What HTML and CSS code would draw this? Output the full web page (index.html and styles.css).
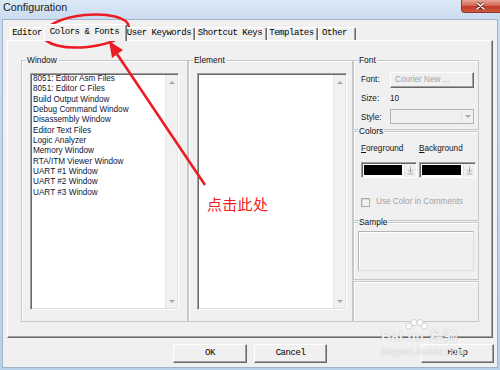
FILE: index.html
```html
<!DOCTYPE html>
<html>
<head>
<meta charset="utf-8">
<title>Configuration</title>
<link rel="stylesheet" href="styles.css">
</head>
<body>
<div class="window">
  <div class="titlebar">
    <span class="title">Configuration</span>
    <div class="close-btn">
      <svg width="9" height="8" viewBox="0 0 9 8"><path d="M1 1 L8 7 M8 1 L1 7" stroke="#6b2418" stroke-width="3" stroke-linecap="round"/><path d="M1 1 L8 7 M8 1 L1 7" stroke="#fff" stroke-width="1.6" stroke-linecap="round"/></svg>
    </div>
  </div>
  <div class="client">
    <div class="tabs">
      <div class="tab tab-editor">Editor</div>
      <div class="tab tab-colors selected">Colors &amp; Fonts</div>
      <div class="tab tab-user">User Keywords</div>
      <div class="tab tab-short">Shortcut Keys</div>
      <div class="tab tab-templ">Templates</div>
      <div class="tab tab-other">Other</div>
    </div>
    <div class="panel">
      <div class="group group-window">
        <span class="legend">Window</span>
        <div class="listbox list-window">
          <ul class="items">
            <li>8051: Editor Asm Files</li>
            <li>8051: Editor C Files</li>
            <li>Build Output Window</li>
            <li>Debug Command Window</li>
            <li>Disassembly Window</li>
            <li>Editor Text Files</li>
            <li>Logic Analyzer</li>
            <li>Memory Window</li>
            <li>RTA/ITM Viewer Window</li>
            <li>UART #1 Window</li>
            <li>UART #2 Window</li>
            <li>UART #3 Window</li>
          </ul>
          <div class="vscroll"><span class="arr up"></span><span class="arr down"></span></div>
        </div>
      </div>
      <div class="group group-element">
        <span class="legend">Element</span>
        <div class="listbox list-element">
          <ul class="items"></ul>
          <div class="vscroll"><span class="arr up"></span><span class="arr down"></span></div>
        </div>
      </div>
      <div class="right-col">
        <div class="group group-font">
          <span class="legend">Font</span>
          <div class="font-grid">
            <span class="lbl lbl-font">Font:</span>
            <div class="btn3d font-btn">Courier New ...</div>
            <span class="lbl lbl-size">Size:</span>
            <span class="lbl size-val">10</span>
            <span class="lbl lbl-style">Style:</span>
            <div class="combo style-combo"><span class="combo-arrow"><span class="tri"></span></span></div>
          </div>
        </div>
        <div class="group group-colors">
          <span class="legend">Colors</span>
          <div class="colors-grid">
            <span class="lbl"><u>F</u>oreground</span>
            <span class="lbl"><u>B</u>ackground</span>
            <div class="color-combo">
              <span class="swatch"></span>
              <span class="drop"><svg width="7" height="9" viewBox="0 0 7 9"><path d="M3.5 0.5 V5" stroke="#a6a6a6" stroke-width="1"/><path d="M1 3.5 L3.5 6.5 L6 3.5" fill="none" stroke="#a6a6a6" stroke-width="1"/><path d="M0.5 8 H6.5" stroke="#a6a6a6" stroke-width="1"/></svg></span>
            </div>
            <div class="color-combo">
              <span class="swatch"></span>
              <span class="drop"><svg width="7" height="9" viewBox="0 0 7 9"><path d="M3.5 0.5 V5" stroke="#a6a6a6" stroke-width="1"/><path d="M1 3.5 L3.5 6.5 L6 3.5" fill="none" stroke="#a6a6a6" stroke-width="1"/><path d="M0.5 8 H6.5" stroke="#a6a6a6" stroke-width="1"/></svg></span>
            </div>
          </div>
          <div class="check-row">
            <span class="checkbox"></span>
            <span class="check-text">Use Color in Comments</span>
          </div>
        </div>
        <div class="group group-sample">
          <span class="legend">Sample</span>
          <div class="sample-box"></div>
        </div>
        <div class="group group-empty"></div>
      </div>
    </div>
    <div class="buttons">
      <div class="btn3d dlg-btn btn-ok">OK</div>
      <div class="btn3d dlg-btn btn-cancel">Cancel</div>
      <div class="btn3d dlg-btn btn-help">Help</div>
    </div>
  </div>

  <div class="watermark">
    <div class="wm-top">
      <span class="wm-bai">Bai</span>
      <span class="wm-paw">
        <svg width="24" height="12" viewBox="0 0 24 12"><circle cx="5" cy="7" r="3" fill="#fff" stroke="#c8c8c8" stroke-width="0.8"/><circle cx="10" cy="3.5" r="3" fill="#fff" stroke="#c8c8c8" stroke-width="0.8"/><circle cx="16" cy="3.5" r="3" fill="#fff" stroke="#c8c8c8" stroke-width="0.8"/><circle cx="20.5" cy="7" r="3" fill="#fff" stroke="#c8c8c8" stroke-width="0.8"/></svg>
        <span class="wm-du">du</span>
      </span>
      <span class="wm-jy">经验</span>
    </div>
    <div class="wm-url">jingyan.baidu.com</div>
  </div>

  <svg class="annot" width="500" height="370" viewBox="0 0 500 370">
    <ellipse cx="86" cy="31" rx="43" ry="16" transform="rotate(-6 86 31)" fill="none" stroke="#ec1c24" stroke-width="2.5"/>
    <line x1="205" y1="185" x2="117" y2="54" stroke="#ec1c24" stroke-width="2.6"/>
    <polygon points="109,41 123,50 112,58" fill="#ec1c24"/>
  </svg>
  <div class="annot-text">点击此处</div>
</div>
</body>
</html>
```
FILE: styles.css
```css
* { box-sizing: border-box; }
html, body { margin: 0; padding: 0; }
body {
  width: 500px;
  height: 370px;
  overflow: hidden;
  font-family: "Liberation Sans", Arial, sans-serif;
  background: #bfd4ec;
}
.window {
  position: relative;
  width: 500px;
  height: 370px;
  background: linear-gradient(180deg, #c9dcf1, #b9d0ea);
  display: flex;
  flex-direction: column;
}
.titlebar {
  height: 19px;
  flex: none;
  display: flex;
  align-items: flex-start;
  background: linear-gradient(180deg, #dce9f6, #cbdcf0);
}
.title {
  font-size: 10.8px;
  line-height: 13px;
  padding: 1px 0 0 3px;
  color: #1b1b1b;
}
.close-btn {
  margin-left: auto;
  width: 39px;
  height: 13px;
  border: 1px solid #8a3b2c;
  border-top: none;
  border-right: none;
  border-radius: 0 0 0 4px;
  background: linear-gradient(180deg, #e8a595 0%, #d46a55 45%, #c0392b 55%, #cf5a3e 100%);
  display: flex;
  align-items: center;
  justify-content: center;
  padding-right: 2px;
}
.close-btn svg { display: block; }

.client {
  flex: 1;
  margin: 0 2px 2px;
  border: 1px solid #a4b3c5;
  background: #f0f0f0;
  display: flex;
  flex-direction: column;
}

/* tabs */
.tabs {
  display: flex;
  align-items: flex-end;
  height: 16px;
  margin: 4px 0 0 7px;
  position: relative;
  z-index: 1;
}
.tab {
  height: 13px;
  font-family: "Liberation Mono", "Courier New", monospace;
  font-size: 9px;
  letter-spacing: -0.45px;
  line-height: 11px;
  text-align: center;
  padding-right: 2px;
  border-top: 1px solid #fff;
  border-left: 1px solid #fff;
  border-right: 1px solid #696969;
  box-shadow: inset -1px 0 0 #a0a0a0;
  border-radius: 2px 2px 0 0;
  color: #000;
  white-space: nowrap;
  overflow: hidden;
  background: #f0f0f0;
}
.tab.selected {
  height: 17px;
  margin: 0 -2px -1px;
  padding-top: 2px;
  position: relative;
  z-index: 2;
}
.tab-editor { width: 36px; }
.tab-colors { width: 83px; }
.tab-user { width: 70px; }
.tab-short { width: 72px; }
.tab-templ { width: 51px; }
.tab-other { width: 38px; padding-right: 5px; }

/* panel */
.panel {
  width: 486px;
  height: 298px;
  margin-left: 4px;
  border: 1px solid;
  border-color: #fff #696969 #696969 #fff;
  box-shadow: inset -1px -1px 0 #a0a0a0;
  padding: 19px 0 0 13px;
  display: flex;
  align-items: flex-start;
}
.group {
  position: relative;
  border: 1px solid #c4c8cc;
  box-shadow: inset 1px 1px 0 #fff;
}
.legend {
  position: absolute;
  top: -6px;
  left: 4px;
  padding: 0 1px;
  background: #f0f0f0;
  font-size: 8.4px;
  line-height: 10px;
  color: #111;
  white-space: nowrap;
}
.group-window {
  width: 167px;
  height: 262px;
  padding: 12px 0 0 8px;
}
.group-element {
  width: 165px;
  height: 262px;
  padding: 12px 0 0 8px;
}
.listbox {
  height: 237px;
  background: #fff;
  border: 1px solid;
  border-color: #a0a0a0 #fff #fff #a0a0a0;
  box-shadow: inset 1px 1px 0 #696969, inset -1px -1px 0 #e3e3e3;
  display: flex;
}
.list-window { width: 149px; }
.list-element { width: 150px; }
.items {
  flex: 1;
  list-style: none;
  margin: 0;
  padding: 0 0 0 2px;
  font-size: 8.2px;
  line-height: 10.33px;
  color: #121636;
  white-space: nowrap;
}
.vscroll {
  width: 12px;
  margin: 1px 1px 1px 0;
  background: #f1f1f1;
  border-left: 1px solid #e6e6e6;
  display: flex;
  flex-direction: column;
  justify-content: space-between;
  align-items: center;
  padding: 6px 0 5px;
}
.arr {
  width: 0;
  height: 0;
  border-left: 3px solid transparent;
  border-right: 3px solid transparent;
}
.arr.up { border-bottom: 3px solid #a8a8a8; }
.arr.down { border-top: 3px solid #a8a8a8; }

/* right column */
.right-col {
  width: 126px;
  height: 262px;
  display: flex;
  flex-direction: column;
}
.group-font {
  height: 70px;
  padding: 11px 0 0 7px;
}
.font-grid {
  display: grid;
  grid-template-columns: 29px 84px;
  grid-template-rows: 16px 21px 15px;
  align-items: center;
}
.lbl {
  font-size: 8.2px;
  line-height: 10px;
  color: #151515;
  white-space: nowrap;
}
.lbl-size, .size-val { padding-top: 1px; }
.lbl-style { padding-top: 2px; }
.btn3d {
  background: #f0f0f0;
  border: 1px solid;
  border-color: #fff #696969 #696969 #fff;
  box-shadow: inset -1px -1px 0 #a0a0a0;
}
.font-btn {
  height: 16px;
  font-size: 8.2px;
  line-height: 13px;
  padding-left: 4px;
  color: #a3a3a3;
  white-space: nowrap;
}
.combo {
  height: 15px;
  border: 1px solid #b3b3b3;
  background: #f0f0f0;
  display: flex;
  justify-content: flex-end;
}
.combo-arrow {
  width: 12px;
  border-left: 1px solid #e2e2e2;
  display: flex;
  align-items: center;
  justify-content: center;
}
.tri {
  width: 0;
  height: 0;
  border-left: 3px solid transparent;
  border-right: 3px solid transparent;
  border-top: 3px solid #a8a8a8;
}

.group-colors {
  height: 90px;
  margin-top: 1px;
  padding: 12px 0 0 7px;
}
.colors-grid {
  display: grid;
  grid-template-columns: 56px 57px;
  column-gap: 2px;
  row-gap: 8px;
}
.color-combo {
  height: 16px;
  background: #fff;
  border: 1px solid;
  border-color: #a0a0a0 #fff #fff #a0a0a0;
  box-shadow: inset 1px 1px 0 #696969;
  display: flex;
}
.swatch {
  flex: 1;
  margin: 2px 2px 2px 2px;
  background: #000;
}
.drop {
  width: 12px;
  background: #f0f0f0;
  border-left: 1px solid #dcdcdc;
  margin: 1px 0 0;
  display: flex;
  align-items: center;
  justify-content: center;
}
.drop svg { display: block; }
.check-row {
  margin-top: 19px;
  display: flex;
  align-items: center;
  height: 10px;
}
.checkbox {
  width: 9px;
  height: 9px;
  border: 1px solid #a9a9a9;
  background: #f3f3f3;
  box-shadow: inset 1px 1px 0 #dadada;
}
.check-text {
  margin-left: 6px;
  font-size: 8.2px;
  line-height: 10px;
  color: #a3a3a3;
  white-space: nowrap;
}
.group-sample {
  height: 58px;
  margin-top: 1px;
  padding: 8px 0 0 4px;
}
.sample-box {
  width: 116px;
  height: 40px;
  border: 1px solid;
  border-color: #b5b5b5 #dedede #dedede #b5b5b5;
  box-shadow: inset 1px 1px 0 #fff;
}
.group-empty {
  height: 41px;
  margin-top: 1px;
}

/* dialog buttons */
.buttons {
  display: flex;
  margin-top: 6px;
  padding: 0 3px 0 170px;
}
.dlg-btn {
  height: 19px;
  font-family: "Liberation Mono", "Courier New", monospace;
  font-size: 9px;
  letter-spacing: -0.45px;
  line-height: 16px;
  text-align: center;
  color: #000;
}
.btn-ok { width: 74px; }
.btn-cancel { width: 73px; margin-left: 7px; }
.btn-help { width: 73px; margin-left: auto; }

/* watermark */
.watermark {
  position: absolute;
  left: 381px;
  top: 316px;
  width: 96px;
  color: rgba(255, 255, 255, 0.9);
  text-shadow: 0 0 1px rgba(110, 110, 110, 0.55);
  pointer-events: none;
}
.wm-top {
  display: flex;
  align-items: flex-end;
  height: 27px;
}
.wm-bai {
  font-family: "Liberation Sans", Arial, sans-serif;
  font-weight: bold;
  font-size: 14px;
  line-height: 14px;
}
.wm-paw {
  display: flex;
  flex-direction: column;
  align-items: center;
  width: 24px;
  margin-left: 1px;
}
.wm-paw svg { display: block; margin-bottom: -1px; }
.wm-du {
  font-weight: bold;
  font-size: 13px;
  line-height: 13px;
}
.wm-jy {
  font-family: "Noto Sans CJK SC", sans-serif;
  font-size: 14px;
  line-height: 16px;
  margin-left: 2px;
  font-weight: bold;
}
.wm-url {
  font-size: 10px;
  line-height: 12px;
  margin-top: 3px;
  letter-spacing: 0.2px;
}

/* red annotation */
.annot {
  position: absolute;
  left: 0;
  top: 0;
  pointer-events: none;
}
.annot-text {
  position: absolute;
  left: 207px;
  top: 195px;
  font-family: "Noto Sans CJK SC", sans-serif;
  font-size: 15px;
  line-height: 18px;
  color: #f01c1c;
  letter-spacing: 0.3px;
  pointer-events: none;
}
```
